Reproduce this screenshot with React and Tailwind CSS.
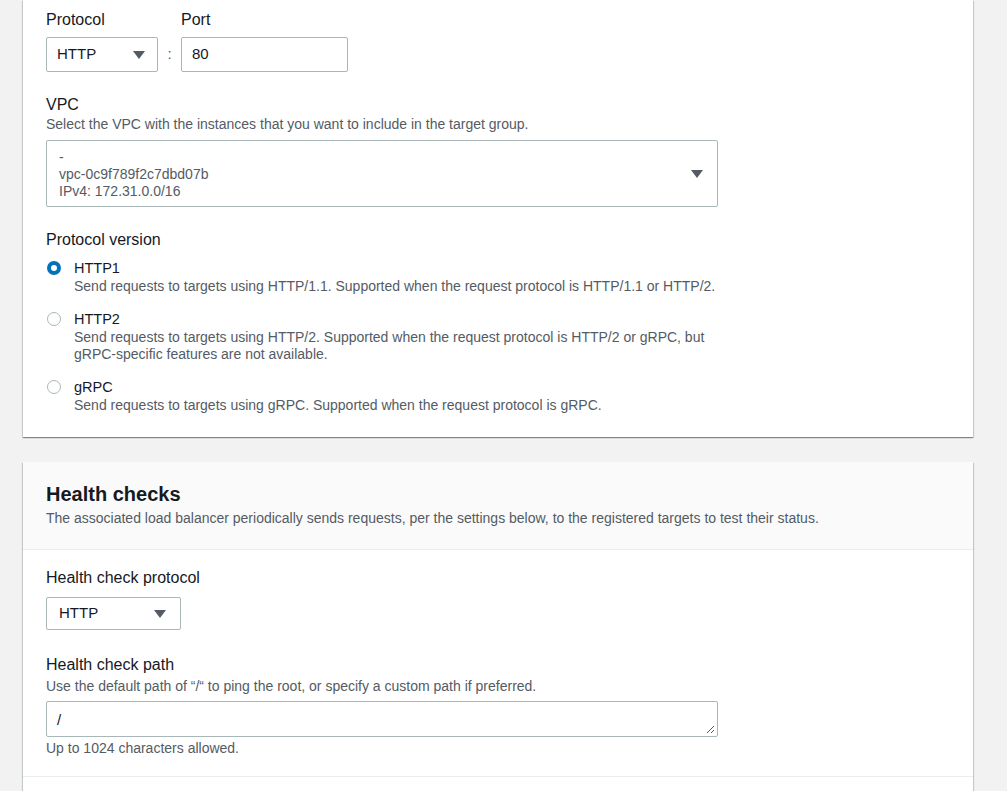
const font = { fontFamily: '"Liberation Sans", Arial, sans-serif' };

function Caret({ className = '' }) {
  return (
    <svg width="12" height="8" viewBox="0 0 12 8" className={className}>
      <path d="M0 0 L12 0 L6 8 Z" fill="#545b64" />
    </svg>
  );
}

function Radio({ checked }) {
  return checked ? (
    <span className="mt-[3px] block h-[14px] w-[14px] shrink-0 rounded-full border-[4px] border-[#0073bb] bg-white" />
  ) : (
    <span className="mt-[3px] block h-[14px] w-[14px] shrink-0 rounded-full border border-[#aab7b8] bg-white" />
  );
}

function Option({ label, desc, checked }) {
  return (
    <div className="flex gap-[13px] pl-[1px]">
      <Radio checked={checked} />
      <div>
        <div className="text-[14.5px] leading-[20px] text-[#16191f]">{label}</div>
        <div className="text-[14px] leading-[17px] text-[#545b64]">{desc}</div>
      </div>
    </div>
  );
}

const cardShadow =
  'shadow-[0_1px_1px_0_rgba(0,28,36,0.3),1px_1px_1px_0_rgba(0,28,36,0.15),-1px_1px_1px_0_rgba(0,28,36,0.15)]';

export default function App() {
  return (
    <div className="min-h-[791px] bg-[#f2f2f2] pl-[23px] pr-[34px]" style={font}>
      {/* target group settings card */}
      <div className={`bg-white px-[23px] pt-[11px] pb-[23px] ${cardShadow}`}>
        <div className="flex items-end">
          <div>
            <div className="mb-[8px] text-[16px] leading-[18px] text-[#16191f]">Protocol</div>
            <div className="flex h-[35px] w-[112px] items-center justify-between rounded-[2px] border border-[#aab7b8] pl-[10px] pr-[12px] text-[15px] text-[#16191f]">
              HTTP
              <Caret />
            </div>
          </div>
          <div className="flex h-[35px] w-[23px] items-center justify-center text-[15px] text-[#545b64]">:</div>
          <div>
            <div className="mb-[8px] text-[16px] leading-[18px] text-[#16191f]">Port</div>
            <div className="flex h-[35px] w-[167px] items-center rounded-[2px] border border-[#aab7b8] px-[10px] text-[15px] text-[#16191f]">
              80
            </div>
          </div>
        </div>

        <div className="mt-[23px] text-[16px] leading-[20px] text-[#16191f]">VPC</div>
        <div className="text-[14px] leading-[18px] text-[#545b64]">
          Select the VPC with the instances that you want to include in the target group.
        </div>
        <div className="mt-[7px] flex h-[67px] w-[672px] items-center justify-between rounded-[2px] border border-[#aab7b8] pl-[12px] pr-[14px]">
          <div className="pt-[2px] text-[14px] leading-[17px] text-[#545b64]">
            <div>-</div>
            <div>vpc-0c9f789f2c7dbd07b</div>
            <div>IPv4: 172.31.0.0/16</div>
          </div>
          <Caret />
        </div>

        <div className="mt-[23px] text-[16px] leading-[20px] text-[#16191f]">Protocol version</div>
        <div className="mt-[8px] flex flex-col gap-[14px]">
          <Option
            checked
            label="HTTP1"
            desc="Send requests to targets using HTTP/1.1. Supported when the request protocol is HTTP/1.1 or HTTP/2."
          />
          <Option
            label="HTTP2"
            desc={
              <>
                Send requests to targets using HTTP/2. Supported when the request protocol is HTTP/2 or gRPC, but
                <br />
                gRPC-specific features are not available.
              </>
            }
          />
          <Option
            label="gRPC"
            desc="Send requests to targets using gRPC. Supported when the request protocol is gRPC."
          />
        </div>
      </div>

      {/* health checks card */}
      <div className={`mt-[25px] bg-white ${cardShadow}`}>
        <div className="border-b border-[#eaeded] bg-[#fafafa] px-[23px] pt-[20px] pb-[22px]">
          <h2 className="text-[20px] font-bold leading-[24px] text-[#16191f]">Health checks</h2>
          <p className="mt-[3px] text-[14px] leading-[18px] text-[#545b64]">
            The associated load balancer periodically sends requests, per the settings below, to the registered targets to test their status.
          </p>
        </div>
        <div className="px-[23px] pt-[18px] pb-[19px]">
          <div className="text-[16px] leading-[20px] text-[#16191f]">Health check protocol</div>
          <div className="mt-[9px] flex h-[33px] w-[135px] items-center justify-between rounded-[2px] border border-[#aab7b8] pl-[12px] pr-[14px] text-[15px] text-[#16191f]">
            HTTP
            <Caret />
          </div>

          <div className="mt-[25px] text-[16px] leading-[20px] text-[#16191f]">Health check path</div>
          <div className="mt-[2px] text-[14px] leading-[18px] text-[#545b64]">
            Use the default path of “/“ to ping the root, or specify a custom path if preferred.
          </div>
          <div className="relative mt-[6px] h-[36px] w-[672px] rounded-[2px] border border-[#aab7b8] px-[10px] pt-[7px] text-[15px] text-[#16191f]">
            /
            <svg width="10" height="10" viewBox="0 0 10 10" className="absolute right-[2px] bottom-[2px]">
              <path d="M9 2 L2 9 M9 6 L6 9" stroke="#545b64" strokeWidth="1" />
            </svg>
          </div>
          <div className="mt-[2px] text-[14px] leading-[18px] text-[#545b64]">Up to 1024 characters allowed.</div>
        </div>
        <div className="h-[40px] border-t border-[#eaeded]" />
      </div>
    </div>
  );
}
